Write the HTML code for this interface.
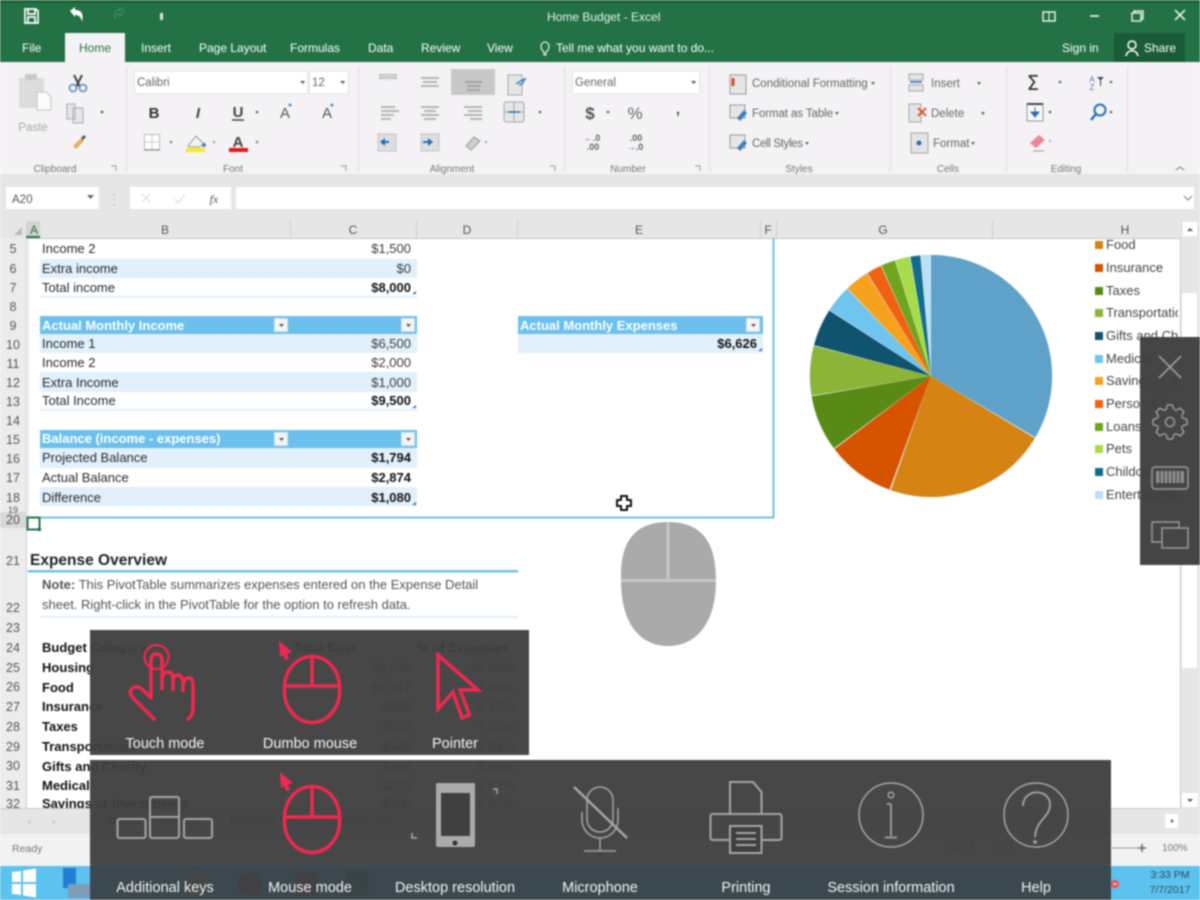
<!DOCTYPE html>
<html><head><meta charset="utf-8"><title>Home Budget - Excel</title>
<style>
html,body{margin:0;padding:0;width:1200px;height:900px;overflow:hidden;background:#fff}
svg{display:block;filter:blur(.7px)}
text{font-family:"Liberation Sans",sans-serif}
.t{font-size:12px;fill:#fff}
.r{font-size:11.5px;fill:#666}
.g{font-size:10px;fill:#777}
.h{font-size:12px;fill:#555;text-anchor:middle}
.n{font-size:12.5px;fill:#555;text-anchor:middle}
.c{font-size:13px;fill:#2a2a2a}
.cr{font-size:13px;fill:#3c3c3c;text-anchor:end}
.b{font-weight:bold;fill:#111}
.w{font-size:13px;font-weight:bold;fill:#fff}
.l{font-size:14.5px;fill:#f4f4f4;text-anchor:middle}
.lg{font-size:13px;fill:#444}
.red{fill:none;stroke:#f02850;stroke-width:3.500}
.gr{fill:none;stroke:#a6a6a6;stroke-width:2}
.ic{fill:none;stroke:#8f8f8f;stroke-width:1.5}
</style></head><body>
<svg width="1200" height="900" viewBox="0 0 1200 900" xmlns="http://www.w3.org/2000/svg">
<defs><clipPath id="cl"><rect x="1090" y="238" width="88" height="280"/></clipPath></defs>

<!-- sheet base -->
<rect width="1200" height="900" fill="#fff"/>

<!-- title bar -->
<rect width="1200" height="62" fill="#237245"/>
<rect width="1200" height="3" fill="#1c6339"/>
<path d="M25 9h11l2 2v12H25zM28 9v5h7V9M28 23v-6h7v6" fill="none" stroke="#fff" stroke-width="1.7"/>
<path d="M70 11l5-4v3c6 0 9 3 7 12-1-5-3-7-7-7v2z" fill="#fff"/>
<path d="M124 11l-4-3v2c-4 0-6 2-5 8 1-3 2-4 5-4v2z" fill="none" stroke="#3f8a5f" stroke-width="1.2"/>
<rect x="160" y="13" width="3" height="7" fill="#d5e5db"/>
<text x="547" y="21" class="t" style="fill:#e8f2ec">Home Budget - Excel</text>
<rect x="1043" y="12" width="12" height="9" fill="none" stroke="#fff" stroke-width="1.3"/><path d="M1049 12v9" stroke="#fff"/>
<path d="M1090 16h9" stroke="#fff" stroke-width="1.5"/>
<path d="M1132 13h9v8h-9zM1134 13v-2h9v8h-2" fill="none" stroke="#fff" stroke-width="1.3"/>
<path d="M1175 10l10 10M1185 10l-10 10" stroke="#fff" stroke-width="1.5"/>
<rect x="65" y="33" width="60" height="29" fill="#f4f2f5"/>
<rect x="1114" y="33" width="71" height="29" fill="#1a5c37"/>
<g class="t">
<text x="22" y="52" class="t">File</text>
<text x="79" y="52" class="t" style="fill:#237245">Home</text>
<text x="141" y="52" class="t">Insert</text>
<text x="199" y="52" class="t">Page Layout</text>
<text x="290" y="52" class="t">Formulas</text>
<text x="368" y="52" class="t">Data</text>
<text x="421" y="52" class="t">Review</text>
<text x="487" y="52" class="t">View</text>
<text x="556" y="52" class="t">Tell me what you want to do...</text>
<text x="1062" y="52" class="t">Sign in</text>
<text x="1144" y="52" class="t">Share</text>
</g>
<path d="M544 55v-3c-5-4-3-10 1-10s6 6 1 10v3z" fill="none" stroke="#fff" stroke-width="1.1"/>
<circle cx="1132" cy="45" r="4" fill="none" stroke="#fff" stroke-width="1.5"/><path d="M1126 56c1-7 11-7 12 0" fill="none" stroke="#fff" stroke-width="1.5"/>

<!-- ribbon -->
<rect y="62" width="1200" height="112" fill="#f4f2f5"/>
<rect x="65" y="60" width="60" height="4" fill="#f4f2f5"/>
<rect y="174" width="1200" height="47" fill="#e6e6e6"/>
<g stroke="#e0dee1"><path d="M126.500 66v105M358.500 66v105M564.500 66v105M709.500 66v105M890.500 66v105M1006.500 66v105M1127.500 66v105"/></g>
<g class="g" text-anchor="middle">
<text x="55" y="172">Clipboard</text><text x="233" y="172">Font</text><text x="452" y="172">Alignment</text><text x="628" y="172">Number</text><text x="799" y="172">Styles</text><text x="948" y="172">Cells</text><text x="1066" y="172">Editing</text>
</g>
<g fill="none" stroke="#999" stroke-width="1"><path d="M111 166h5v5M341 166h5v5M550 166h5v5M695 166h5v5"/></g>
<path d="M1176 170l4-3 4 3" fill="none" stroke="#777"/>

<!-- clipboard -->
<rect x="19" y="78" width="25" height="30" fill="#dcdcdc"/><rect x="25" y="74" width="12" height="6" fill="#c8c8c8"/>
<path d="M37 92h9l5 5v13H37z" fill="#fbfbfb" stroke="#c5c5c5"/>
<text x="33" y="131" class="r" style="fill:#aaa" text-anchor="middle">Paste</text>
<path d="M74 75l6 12M82 75l-6 12" stroke="#444" stroke-width="2"/><circle cx="73" cy="88" r="3.500" fill="none" stroke="#6d94bd" stroke-width="1.800"/><circle cx="83" cy="88" r="3.500" fill="none" stroke="#6d94bd" stroke-width="1.800"/>
<path d="M67 104h8v15h-8zM73 108h10v15H73z" fill="#e3e7ec" stroke="#aaa"/>
<circle cx="102" cy="112" r="1.400" fill="#666"/>
<path d="M73 146l8-8 3 3-8 8z" fill="#e3b05a"/><path d="M81 138l3-3 2 2-3 3z" fill="#555"/>

<!-- font -->
<rect x="134.500" y="71" width="173" height="23" fill="#fff" stroke="#e3e1e4"/>
<rect x="309.500" y="71" width="39" height="23" fill="#fff" stroke="#e3e1e4"/>
<text x="137" y="86" class="r">Calibri</text><text x="312" y="86" class="r">12</text>
<path d="M300 81l3 3 2-3M340 81l3 3 2-3" fill="#555"/>
<text x="154" y="118" text-anchor="middle" style="font-size:15px;font-weight:bold;fill:#333">B</text>
<text x="198" y="118" text-anchor="middle" style="font-size:15px;font-weight:bold;font-style:italic;fill:#444">I</text>
<text x="238" y="117" text-anchor="middle" style="font-size:15px;font-weight:bold;fill:#444">U</text><path d="M232 120h12" stroke="#444" stroke-width="1.500"/>
<text x="285" y="118" text-anchor="middle" style="font-size:15px;fill:#555">A</text><circle cx="290" cy="105" r="1.500" fill="#4a90d0"/>
<text x="327" y="118" text-anchor="middle" style="font-size:15px;fill:#555">A</text><circle cx="332" cy="105" r="1.500" fill="#4a90d0"/>
<circle cx="257" cy="112" r="1.300" fill="#666"/>
<rect x="144.500" y="134.500" width="15" height="15" fill="#fff" stroke="#bbb"/><path d="M152 135v15M145 142h15" stroke="#ccc"/><path d="M144 150h16" stroke="#888"/>
<circle cx="171" cy="142" r="1.300" fill="#888"/>
<path d="M188 146l8-10 8 8-5 3h-9z" fill="#f3f3f3" stroke="#999"/><circle cx="204" cy="145" r="2" fill="#4a82c0"/>
<rect x="186" y="148" width="19" height="4" fill="#f5ec1c"/>
<circle cx="214" cy="142" r="1.300" fill="#aaa"/>
<text x="238" y="147" text-anchor="middle" style="font-size:15px;font-weight:bold;fill:#444">A</text>
<rect x="229" y="148" width="19" height="4" fill="#e8141c"/>
<circle cx="257" cy="142" r="1.300" fill="#888"/>

<!-- alignment -->
<rect x="451" y="69" width="44" height="26" fill="#c8c8c8"/>
<g stroke="#b5b5b5" stroke-width="2" fill="none">
<path d="M379 75h18M379 78h18"/><path d="M381 76h14M381 79h14" stroke="#ddd"/>
<path d="M421 78h18M423 82h14M421 86h18"/>
<path d="M465 82h17M467 86h13M467 90h13" stroke="#a3a3a3"/>
<path d="M381 107h14M381 111h18M381 115h13M381 119h10"/>
<path d="M421 107h18M424 111h12M421 115h18M424 119h12"/>
<path d="M464 107h18M468 111h14M464 115h18M470 119h12"/>
</g>
<rect x="508" y="75" width="14" height="20" fill="#e6e6e6" stroke="#a9a9a9"/><path d="M516 84l6-4 3-1-3 5-3 1" fill="none" stroke="#3c7fc0" stroke-width="1.500"/>
<rect x="504" y="102" width="20" height="20" rx="2" fill="#e6e6e6" stroke="#a5a5a5"/><path d="M504 112h20M514 102v20" stroke="#a5a5a5" fill="none"/><path d="M508 112h12" stroke="#2a6fb5" stroke-width="1.500"/>
<circle cx="540" cy="112" r="1.300" fill="#666"/>
<rect x="378" y="134" width="18" height="17" fill="#dedede" stroke="#c5c5c5"/><path d="M385 138l-5 4 5 4z" fill="#1f6fbf"/><path d="M384 142h5" stroke="#1f6fbf" stroke-width="2"/>
<rect x="421" y="134" width="18" height="17" fill="#dedede" stroke="#c5c5c5"/><path d="M428 138l5 4-5 4z" fill="#1f6fbf"/><path d="M423 142h6" stroke="#1f6fbf" stroke-width="2"/>
<path d="M466 146l8-9 6 4-9 9z" fill="#cfcfcf" stroke="#999"/>
<circle cx="486" cy="142" r="1.100" fill="#999"/>

<!-- number -->
<rect x="572.500" y="71" width="127" height="23" fill="#fff" stroke="#e3e1e4"/>
<text x="575" y="86" class="r">General</text><path d="M691 81l3 3 2-3" fill="#555"/>
<text x="590" y="119" text-anchor="middle" style="font-size:17px;font-weight:bold;fill:#555">$</text>
<circle cx="608" cy="112" r="1.300" fill="#666"/>
<text x="635" y="119" text-anchor="middle" style="font-size:17px;fill:#666">%</text>
<text x="678" y="114" text-anchor="middle" style="font-size:15px;font-weight:bold;fill:#555">,</text>
<text x="592" y="141" text-anchor="middle" style="font-size:9px;fill:#666;font-weight:bold">←.0</text><text x="593" y="150" text-anchor="middle" style="font-size:9px;fill:#666;font-weight:bold">.00</text>
<text x="636" y="141" text-anchor="middle" style="font-size:9px;fill:#666;font-weight:bold">.00</text><text x="635" y="150" text-anchor="middle" style="font-size:9px;fill:#666;font-weight:bold">→.0</text>

<!-- styles -->
<g fill="#e6e6e6" stroke="#999"><rect x="730" y="75" width="16" height="19"/><rect x="730" y="105" width="15" height="13"/><rect x="730" y="135" width="15" height="13"/></g>
<path d="M733 78v8" stroke="#d94a2b" stroke-width="3"/>
<path d="M737 118l7-8 3 3-7 8zM737 148l7-8 3 3-7 8z" fill="#3d7fc0"/>
<g class="r" style="fill:#555"><text x="752" y="87" class="r">Conditional Formatting</text><text x="752" y="117" class="r" textLength="81">Format as Table</text><text x="752" y="147" class="r" textLength="51">Cell Styles</text></g>
<path d="M871 82l4 0-2 3zM835 112l4 0-2 3zM805 142l4 0-2 3z" fill="#666"/>

<!-- cells -->
<g fill="#e4e4e4" stroke="#a5a5a5"><rect x="909" y="74" width="14" height="6"/><rect x="909" y="85" width="14" height="6"/><rect x="909" y="104" width="12" height="18"/><rect x="911" y="133" width="17" height="20"/></g>
<path d="M910 82h12" stroke="#2a6fb5" stroke-width="1.500"/><path d="M918 108l8 8M926 108l-8 8" stroke="#e0491c" stroke-width="1.800"/><circle cx="919" cy="143" r="2.500" fill="#2a6fb5"/>
<g class="r" style="fill:#555"><text x="931" y="87" class="r">Insert</text><text x="931" y="117" class="r">Delete</text><text x="933" y="147" class="r">Format</text></g>
<path d="M977 82l4 0-2 3zM981 112l4 0-2 3zM971 142l4 0-2 3z" fill="#666"/>

<!-- editing -->
<text x="1033" y="90" text-anchor="middle" style="font-size:20px;font-family:'DejaVu Sans',sans-serif;fill:#333">Σ</text>
<circle cx="1060" cy="82" r="1.300" fill="#666"/>
<text x="1092" y="82" text-anchor="middle" style="font-size:8px;fill:#3d7fc0">A</text><text x="1092" y="90" text-anchor="middle" style="font-size:8px;fill:#8a5fa8">Z</text><path d="M1097 77h7l-3 3v6h-1v-6z" fill="#444"/>
<circle cx="1111" cy="82" r="1.300" fill="#666"/>
<rect x="1027" y="104" width="16" height="17" fill="#f8f8f8" stroke="#999"/><path d="M1027 104h16" stroke="#444" stroke-width="2"/><path d="M1035 107v6M1031 112h8l-4 5z" fill="#2a6fb5" stroke="#2a6fb5"/>
<circle cx="1050" cy="112" r="1.300" fill="#666"/>
<circle cx="1100" cy="110" r="5.500" fill="none" stroke="#2a6fb5" stroke-width="2"/><path d="M1096 114l-5 6" stroke="#2a6fb5" stroke-width="2.500"/>
<circle cx="1111" cy="112" r="1.300" fill="#666"/>
<path d="M1030 143l9-8 6 5-9 8z" fill="#ee8595"/><path d="M1033 151h11" stroke="#999"/>
<circle cx="1050" cy="141" r="1.100" fill="#aaa"/>

<!-- formula bar -->
<rect x="6" y="187" width="93" height="22" fill="#fff"/><text x="12" y="203" class="r" style="fill:#555">A20</text><path d="M87 195h7l-3.500 4z" fill="#666"/>
<path d="M114 194v1M114 199v1M114 204v1" stroke="#aaa" stroke-width="1.500"/>
<rect x="130" y="187" width="101" height="22" fill="#fff"/><rect x="236" y="187" width="958" height="22" fill="#fff"/>
<path d="M142 194l8 8M150 194l-8 8" stroke="#ddd" stroke-width="1.200"/><path d="M175 199l3 4 7-9" fill="none" stroke="#ddd" stroke-width="1.200"/>
<text x="214" y="203" text-anchor="middle" style="font-size:12px;font-style:italic;fill:#555;font-family:'Liberation Serif',serif">fx</text>
<path d="M1184 196l4 4 4-4" fill="none" stroke="#777"/>

<!-- column headers -->
<rect y="221" width="1200" height="17" fill="#e6e6e6"/>
<rect x="26" y="221" width="14" height="17" fill="#d3d3d3"/><path d="M26 237h14" stroke="#217346" stroke-width="2"/>
<path d="M14 235l8-8v8z" fill="#bbb"/>
<path d="M290.500 221v17M416.500 221v17M517.500 221v17M760.500 221v17M776.500 221v17M992.500 221v17" stroke="#cfcfcf"/>
<path d="M0 238.500H1180" stroke="#c8c8c8"/>
<g class="h"><text x="34" y="234" class="h" style="fill:#217346">A</text><text x="165" y="234" class="h">B</text><text x="353" y="234" class="h">C</text><text x="467" y="234" class="h">D</text><text x="639" y="234" class="h">E</text><text x="768" y="234" class="h">F</text><text x="883" y="234" class="h">G</text><text x="1125" y="234" class="h">H</text></g>

<!-- row headers -->
<rect y="238" width="27" height="570" fill="#ececec"/>
<path d="M26.500 238V808" stroke="#cfcfcf"/>
<rect y="512" width="27" height="16" fill="#d8d8d8"/>
<g class="n">
<text x="13" y="253" class="n">5</text><text x="13" y="273" class="n">6</text><text x="13" y="292" class="n">7</text><text x="13" y="311" class="n">8</text><text x="13" y="330" class="n">9</text><text x="13" y="349" class="n">10</text><text x="13" y="368" class="n">11</text><text x="13" y="387" class="n">12</text><text x="13" y="406" class="n">13</text><text x="13" y="425" class="n">14</text><text x="13" y="444" class="n">15</text><text x="13" y="463" class="n">16</text><text x="13" y="482" class="n">17</text><text x="13" y="502" class="n">18</text><text x="13" y="513" class="n" style="font-size:9px">19</text><text x="13" y="524" class="n">20</text><text x="13" y="565" class="n">21</text><text x="13" y="612" class="n">22</text><text x="13" y="632" class="n">23</text><text x="13" y="652" class="n">24</text><text x="13" y="672" class="n">25</text><text x="13" y="691" class="n">26</text><text x="13" y="711" class="n">27</text><text x="13" y="731" class="n">28</text><text x="13" y="751" class="n">29</text><text x="13" y="770" class="n">30</text><text x="13" y="790" class="n">31</text><text x="13" y="808" class="n">32</text>
</g>

<!-- tables -->
<g fill="#e1f0fb">
<rect x="40" y="259" width="377" height="19"/><rect x="40" y="334" width="377" height="19"/><rect x="40" y="372" width="377" height="20"/><rect x="40" y="448" width="377" height="20"/><rect x="40" y="487" width="377" height="19"/><rect x="518" y="334" width="245" height="19"/>
<rect x="40" y="296" width="377" height="2"/><rect x="40" y="409" width="377" height="2"/>
</g>
<g fill="#6cc0ec"><rect x="40" y="316" width="377" height="18"/><rect x="40" y="430" width="377" height="18"/><rect x="518" y="316" width="245" height="18"/></g>
<g fill="#f4f4f4" stroke="#cfe3ef"><rect x="274.500" y="318.500" width="13" height="13"/><rect x="401.500" y="318.500" width="13" height="13"/><rect x="274.500" y="432.500" width="13" height="13"/><rect x="401.500" y="432.500" width="13" height="13"/><rect x="746.500" y="318.500" width="13" height="13"/></g>
<path d="M279 324h5l-2.500 3zM406 324h5l-2.500 3zM279 438h5l-2.500 3zM406 438h5l-2.500 3zM751 324h5l-2.500 3z" fill="#555"/>
<path d="M412 294h4v-3zM412 408h4v-3zM412 505h4v-3zM758 351h4v-3z" fill="#2e6fc4"/>

<text x="42" y="253" class="c">Income 2</text><text x="411" y="253" class="cr">$1,500</text>
<text x="42" y="273" class="c">Extra income</text><text x="411" y="273" class="cr">$0</text>
<text x="42" y="292" class="c">Total income</text><text x="411" y="292" class="cr b">$8,000</text>
<text x="42" y="330" class="w">Actual Monthly Income</text>
<text x="42" y="348" class="c">Income 1</text><text x="411" y="348" class="cr">$6,500</text>
<text x="42" y="367" class="c">Income 2</text><text x="411" y="367" class="cr">$2,000</text>
<text x="42" y="387" class="c">Extra Income</text><text x="411" y="387" class="cr">$1,000</text>
<text x="42" y="405" class="c">Total Income</text><text x="411" y="405" class="cr b">$9,500</text>
<text x="42" y="443" class="w">Balance (income - expenses)</text>
<text x="42" y="462" class="c">Projected Balance</text><text x="411" y="462" class="cr b">$1,794</text>
<text x="42" y="482" class="c">Actual Balance</text><text x="411" y="482" class="cr b">$2,874</text>
<text x="42" y="502" class="c">Difference</text><text x="411" y="502" class="cr b">$1,080</text>
<text x="520" y="330" class="w">Actual Monthly Expenses</text>
<text x="757" y="348" class="cr b">$6,626</text>

<!-- chart border -->
<path d="M28 517.500H773.500V238" fill="none" stroke="#6cc0ec" stroke-width="2"/>
<path d="M28.500 238V517" stroke="#d6eaf5"/>
<rect x="27.500" y="517.500" width="12" height="12" fill="none" stroke="#217346" stroke-width="2"/>
<rect x="38" y="528" width="3" height="3" fill="#217346"/>

<!-- move cursor -->
<path d="M621 496h6v4h4v6h-4v4h-6v-4h-4v-6h4z" fill="#fff" stroke="#111" stroke-width="2" stroke-linejoin="round"/>

<!-- pie -->
<circle cx="931" cy="376" r="121.500" fill="#dfe7ea"/>
<g fill="none" stroke-width="121" transform="rotate(-90 931 376)">
<circle cx="931" cy="376" r="60.500" pathLength="100" stroke="#5ea1c9" stroke-dasharray="33.500 100"/>
<circle cx="931" cy="376" r="60.500" pathLength="100" stroke="#d58313" stroke-dasharray="21.800 100" stroke-dashoffset="-33.650"/>
<circle cx="931" cy="376" r="60.500" pathLength="100" stroke="#d65300" stroke-dasharray="9.100 100" stroke-dashoffset="-55.650"/>
<circle cx="931" cy="376" r="60.500" pathLength="100" stroke="#5a8a16" stroke-dasharray="7.500 100" stroke-dashoffset="-64.900"/>
<circle cx="931" cy="376" r="60.500" pathLength="100" stroke="#8cb436" stroke-dasharray="6.600 100" stroke-dashoffset="-72.500"/>
<circle cx="931" cy="376" r="60.500" pathLength="100" stroke="#10536f" stroke-dasharray="5 100" stroke-dashoffset="-79.200"/>
<circle cx="931" cy="376" r="60.500" pathLength="100" stroke="#6fc5ee" stroke-dasharray="3.600 100" stroke-dashoffset="-84.300"/>
<circle cx="931" cy="376" r="60.500" pathLength="100" stroke="#f6a21e" stroke-dasharray="3.200 100" stroke-dashoffset="-88"/>
<circle cx="931" cy="376" r="60.500" pathLength="100" stroke="#f0620f" stroke-dasharray="2 100" stroke-dashoffset="-91.300"/>
<circle cx="931" cy="376" r="60.500" pathLength="100" stroke="#6da51e" stroke-dasharray="1.900 100" stroke-dashoffset="-93.400"/>
<circle cx="931" cy="376" r="60.500" pathLength="100" stroke="#a7dc48" stroke-dasharray="1.900 100" stroke-dashoffset="-95.400"/>
<circle cx="931" cy="376" r="60.500" pathLength="100" stroke="#126c8d" stroke-dasharray="1.300 100" stroke-dashoffset="-97.400"/>
<circle cx="931" cy="376" r="60.500" pathLength="100" stroke="#b8e0f8" stroke-dasharray="1.200 100" stroke-dashoffset="-98.800"/>
</g>

<!-- legend -->
<g clip-path="url(#cl)">
<rect x="1095" y="241" width="8" height="8" fill="#d58313"/><text x="1106" y="249" class="lg">Food</text>
<rect x="1095" y="264" width="8" height="8" fill="#d65300"/><text x="1106" y="272" class="lg">Insurance</text>
<rect x="1095" y="287" width="8" height="8" fill="#5a8a16"/><text x="1106" y="295" class="lg">Taxes</text>
<rect x="1095" y="309" width="8" height="8" fill="#8cb436"/><text x="1106" y="317" class="lg">Transportation</text>
<rect x="1095" y="332" width="8" height="8" fill="#10536f"/><text x="1106" y="340" class="lg">Gifts and Charity</text>
<rect x="1095" y="355" width="8" height="8" fill="#6fc5ee"/><text x="1106" y="363" class="lg">Medical</text>
<rect x="1095" y="377" width="8" height="8" fill="#f6a21e"/><text x="1106" y="385" class="lg">Savings or Inv</text>
<rect x="1095" y="400" width="8" height="8" fill="#f0620f"/><text x="1106" y="408" class="lg">Personal Care</text>
<rect x="1095" y="423" width="8" height="8" fill="#6da51e"/><text x="1106" y="431" class="lg">Loans</text>
<rect x="1095" y="445" width="8" height="8" fill="#a7dc48"/><text x="1106" y="453" class="lg">Pets</text>
<rect x="1095" y="468" width="8" height="8" fill="#126c8d"/><text x="1106" y="476" class="lg">Childcare</text>
<rect x="1095" y="491" width="8" height="8" fill="#b8e0f8"/><text x="1106" y="499" class="lg">Entertainment</text>
</g>

<!-- big gray mouse -->
<path d="M621 580C620 545 632 522 668 522C704 522 716 545 716 580C716 625 695 646 668 646C641 646 621 625 621 580Z" fill="#aaa"/>
<path d="M668 522v58M621 580.500h95" stroke="#c6c6c6" stroke-width="3" fill="none"/>

<!-- expense overview -->
<text x="30" y="565" style="font-size:15.500px;font-weight:bold;fill:#222">Expense Overview</text>
<rect x="28" y="570" width="490" height="2.500" fill="#6cc0ec"/>
<text x="42" y="589" class="c" style="fill:#555"><tspan style="font-weight:bold">Note:</tspan> This PivotTable summarizes expenses entered on the Expense Detail</text>
<text x="42" y="609" class="c" style="fill:#555">sheet. Right-click in the PivotTable for the option to refresh data.</text>
<rect x="40" y="616" width="478" height="2" fill="#e1f0fb"/>

<g class="c b" style="font-size:13px">
<text x="42" y="652" class="c b">Budget Category</text><text x="42" y="672" class="c b">Housing</text><text x="42" y="692" class="c b">Food</text><text x="42" y="711" class="c b">Insurance</text><text x="42" y="731" class="c b">Taxes</text><text x="42" y="751" class="c b">Transportation</text><text x="42" y="771" class="c b">Gifts and Charity</text><text x="42" y="790" class="c b">Medical</text><text x="42" y="808" class="c b">Savings or Investments</text>
</g>
<g class="cr"><text x="356" y="652" class="cr b">Total Cost</text><text x="509" y="652" class="cr b">% of Expenses</text>
<text x="411" y="672" class="cr">$2,245</text><text x="514" y="672" class="cr">33.88%</text>
<text x="411" y="692" class="cr">$1,447</text><text x="514" y="692" class="cr">21.84%</text>
<text x="411" y="711" class="cr">$606</text><text x="514" y="711" class="cr">9.15%</text>
<text x="411" y="731" class="cr">$500</text><text x="514" y="731" class="cr">7.55%</text>
<text x="411" y="751" class="cr">$440</text><text x="514" y="751" class="cr">6.64%</text>
<text x="411" y="771" class="cr">$335</text><text x="514" y="771" class="cr">5.06%</text>
<text x="411" y="790" class="cr">$240</text><text x="514" y="790" class="cr">3.62%</text>
<text x="411" y="808" class="cr">$300</text><text x="514" y="808" class="cr">4.07%</text></g>

<!-- scrollbar -->
<rect x="1180" y="221" width="20" height="587" fill="#e6e6e6"/>
<rect x="1182" y="293" width="15" height="375" fill="#fff"/>
<rect x="1182" y="221" width="16" height="16" fill="#fff" stroke="#ddd"/><path d="M1187 231l3-3 3 3z" fill="#555"/>
<rect x="1182" y="793" width="16" height="14" fill="#fff"/><path d="M1187 799l3 3 3-3z" fill="#555"/>
<path d="M1180.500 238V808" stroke="#c8c8c8"/>

<!-- sheet tabs / status -->
<rect y="808" width="1200" height="26" fill="#e6e6e6"/>
<path d="M0 808.500H1180" stroke="#c8c8c8"/>
<path d="M31 820l-3 2 3 2M52 820l3 2-3 2" fill="none" stroke="#c0c0c0"/>
<text x="108" y="824" style="font-size:12px;fill:#555">Budget Overview</text>
<text x="230" y="824" style="font-size:12px;fill:#555">Expense Detail</text>
<text x="330" y="824" style="font-size:12px;fill:#555">Budget Log</text>
<rect x="1165" y="814" width="13" height="14" fill="#fff"/><path d="M1171 819l3 2-3 2z" fill="#555"/>
<rect y="834" width="1200" height="32" fill="#f2f2f2"/>
<text x="12" y="852" style="font-size:10.500px;fill:#777">Ready</text>
<rect x="950" y="841" width="12" height="12" fill="#bbb"/><rect x="960" y="841" width="12" height="12" fill="none" stroke="#888"/><rect x="1000" y="841" width="12" height="12" fill="none" stroke="#888"/>
<path d="M1112 848h26" stroke="#999"/><path d="M1138 848h8M1142 844v8" stroke="#666" stroke-width="1.500"/>
<text x="1162" y="851" style="font-size:10px;fill:#777">100%</text>

<!-- taskbar -->
<rect y="866" width="1200" height="34" fill="#5cc2ee"/>
<path d="M12 872l9-1v11h-9zM23 870.500l13-2v13.500H23zM12 884h9v11l-9-1zM23 884h13v13.500l-13-2z" fill="#fff"/>
<rect x="63" y="868" width="13" height="20" fill="#1f7fd4"/>
<rect x="68" y="884" width="24" height="14" fill="#7f9db5"/>
<circle cx="195" cy="884" r="12" fill="#d9a23a"/>
<circle cx="250" cy="884" r="12" fill="#d84a3c"/>
<rect x="295" y="872" width="22" height="24" fill="#c43a2e"/>
<rect x="345" y="870" width="24" height="26" fill="#1e7145"/>
<circle cx="1115" cy="884" r="4" fill="#f05050"/><path d="M1113 884h4" stroke="#fff"/>
<text x="1170" y="878" style="font-size:10.500px;fill:#2e4a5c" text-anchor="middle">3:33 PM</text>
<text x="1170" y="893" style="font-size:10.500px;fill:#2e4a5c" text-anchor="middle">7/7/2017</text>

<!-- side panel -->
<rect x="1140" y="337" width="60" height="228" fill="#3f3f3f" fill-opacity=".97"/>
<path d="M1159 356l22 22M1181 356l-22 22" stroke="#a8a8a8" stroke-width="1.500"/>
<g fill="none" stroke="#9a9a9a" stroke-width="1.500">
<circle cx="1170" cy="422" r="4.500"/>
<circle cx="1170" cy="422" r="13" stroke-dasharray="2.200 8" stroke-dashoffset="-4"/>
<path d="M1166 409.500L1167.500 405H1172.500L1174 409.500"/>
<path d="M1166 409.500L1167.500 405H1172.500L1174 409.500" transform="rotate(45 1170 422)"/>
<path d="M1166 409.500L1167.500 405H1172.500L1174 409.500" transform="rotate(90 1170 422)"/>
<path d="M1166 409.500L1167.500 405H1172.500L1174 409.500" transform="rotate(135 1170 422)"/>
<path d="M1166 409.500L1167.500 405H1172.500L1174 409.500" transform="rotate(180 1170 422)"/>
<path d="M1166 409.500L1167.500 405H1172.500L1174 409.500" transform="rotate(225 1170 422)"/>
<path d="M1166 409.500L1167.500 405H1172.500L1174 409.500" transform="rotate(270 1170 422)"/>
<path d="M1166 409.500L1167.500 405H1172.500L1174 409.500" transform="rotate(315 1170 422)"/>
<rect x="1152" y="467" width="36" height="22" rx="3"/>
<path d="M1152 522H1179V528M1152 522V542H1162"/>
<rect x="1162" y="528" width="26" height="20"/>
</g>
<rect x="1156" y="471" width="28" height="12" fill="#8e8e8e"/>
<path d="M1160 471v12M1164 471v12M1168 471v12M1172 471v12M1176 471v12M1180 471v12" stroke="#3f3f3f"/>

<!-- touch panel -->
<rect x="90" y="630" width="439" height="125" fill="#3f3f3f" fill-opacity=".96"/>
<circle cx="156.500" cy="657" r="12" fill="none" stroke="#f02850" stroke-width="2.200"/>
<path d="M155 720L134 699Q127 692 133 688Q138 685 143 690L151 698V661Q151 654 156.500 654Q162 654 162 661V690M162 680Q162 672 168 672Q173 672 173 679V691M173 681Q173 675 178 675Q183 676 183 683V692M183 685Q184 678 189 678Q193 678 193 686V708Q193 716 187 720" class="red" stroke-linejoin="round"/>
<rect x="284.500" y="656.500" width="55" height="66" rx="27.500" ry="31" class="red"/>
<path d="M285 686H339M312 657V686" class="red" stroke-width="3"/>
<path d="M279 641L292 652L287 654L289 659L285 660L283 655L280 657Z" fill="#f02850"/>
<path d="M438 655V709L453 692L462 718L469.500 715L460 690H478Z" class="red" stroke-width="4"/>
<text x="165" y="748" class="l">Touch mode</text><text x="310" y="748" class="l">Dumbo mouse</text><text x="455" y="748" class="l">Pointer</text>

<!-- main panel -->
<rect x="90" y="760" width="1021" height="103" fill="#404040" fill-opacity=".96"/>
<rect x="90" y="863" width="1021" height="37" fill="#3a4146" fill-opacity=".95"/>
<g class="gr">
<rect x="117.500" y="819" width="28" height="19" rx="2"/>
<rect x="150" y="797" width="29" height="41" rx="2"/><path d="M150 817H179"/>
<rect x="184" y="819" width="28" height="19" rx="2"/>
</g>
<rect x="284.500" y="786.500" width="55" height="66" rx="27.500" ry="31" class="red"/>
<path d="M285 817H339M312 787V817" class="red" stroke-width="3"/>
<path d="M280 772L293 783L288 785L290 790L286 791L284 786L281 788Z" fill="#f02850"/>

<rect x="436" y="783" width="39" height="64" rx="2" fill="#ababab"/>
<rect x="441" y="793" width="29" height="43" fill="#404040"/>
<circle cx="455" cy="843" r="2.500" fill="#333"/>
<path d="M493 789h4v5M412 833v5h5" fill="none" stroke="#aaa" stroke-width="1.500"/>

<g fill="none" stroke="#a6a6a6" stroke-width="1.500">
<path d="M587 800A13 13 0 0 1 613 800V819A13 13 0 0 1 587 819Z"/>
<path d="M582 812V820A18 18 0 0 0 618 820V808"/>
<path d="M600 838V850M584 851H616"/>
</g>
<path d="M574 787L627 838" stroke="#a6a6a6" stroke-width="2.500"/>

<g fill="none" stroke="#a6a6a6" stroke-width="2">
<path d="M730 814V782H753L761.500 792V814"/>
<rect x="710.500" y="814" width="71" height="26" rx="2"/>
<rect x="730" y="826" width="31.500" height="27" fill="#404040"/>
<path d="M736 833H756M736 839H756M736 845H756"/>
</g>
<g fill="none" stroke="#a6a6a6" stroke-width="1.500">
<circle cx="891" cy="815" r="32"/>
<circle cx="891" cy="795" r="2.800"/>
<path d="M891 804V836M885 837.500H897M887 804H891" stroke-width="1.700"/>
<circle cx="1036" cy="815" r="32"/>
<path d="M1023 806C1023 788 1050 788 1050 805C1050 817 1036 820 1035 837" stroke-width="1.800"/>
</g>
<circle cx="1035" cy="842" r="1.800" fill="#a6a6a6"/>

<text x="165" y="892" class="l">Additional keys</text>
<text x="310" y="892" class="l">Mouse mode</text>
<text x="455" y="892" class="l">Desktop resolution</text>
<text x="600" y="892" class="l">Microphone</text>
<text x="746" y="892" class="l">Printing</text>
<text x="891" y="892" class="l">Session information</text>
<text x="1036" y="892" class="l">Help</text>
</svg>
</body></html>
